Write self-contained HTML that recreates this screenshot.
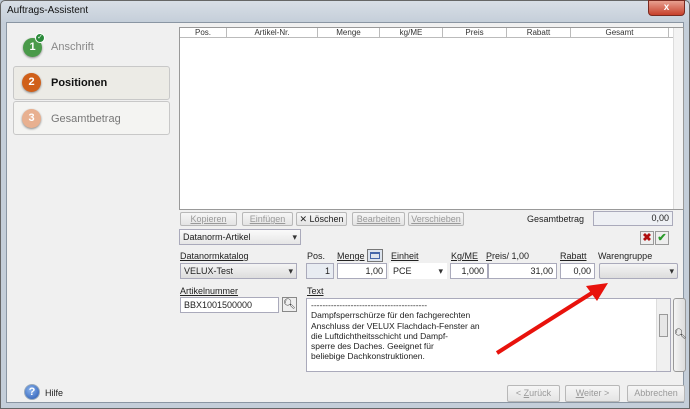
<!DOCTYPE html><html><head><style>
*{box-sizing:border-box;margin:0;padding:0}
body{width:690px;height:409px;overflow:hidden;font-family:"Liberation Sans",sans-serif;font-size:9px;color:#222;background:#bcc7d3;position:relative}
.a{position:absolute}
.win{left:0;top:0;width:690px;height:409px;background:linear-gradient(#d8dee6,#c4ced9 22px,#c4ced9);border:1px solid #666;border-radius:5px 5px 0 0}
.cl{left:6px;top:22px;width:678px;height:381px;background:#f0f0f0;border:1px solid #8a96a3}
.btn{position:absolute;height:14px;border:1px solid #b8b8b8;background:linear-gradient(#f6f6f6,#e4e4e4);border-radius:2px;color:#999;text-align:center;line-height:12px;font-size:9px}
.in{position:absolute;height:16px;border:1px solid #aab;background:#fff;line-height:14px;padding:0 3px;font-size:9px}
.lb{position:absolute;font-size:9px;color:#222}
.u{text-decoration:underline}
.dd:after{content:"▾";position:absolute;right:3px;top:0;font-size:9px;color:#333}
.circ{position:absolute;width:19px;height:19px;border-radius:50%;color:#fff;font-weight:bold;font-size:11px;text-align:center;line-height:19px;box-shadow:0 1px 2px #888}
.step{position:absolute;left:13px;width:157px;height:34px;border:1px solid #c8c8c8;border-radius:3px}
</style></head><body>
<div class="a win"></div>
<div class="a" style="left:7px;top:5px;font-size:10px;color:#111">Auftrags-Assistent</div>
<div class="a" style="left:648px;top:0;width:37px;height:16px;background:linear-gradient(#e8a090,#c7402b);border:1px solid #7a2a20;border-radius:0 0 4px 4px;color:#fff;text-align:center;font-weight:bold;font-size:10px;line-height:14px">x</div>
<div class="a cl"></div>
<!-- sidebar -->
<div class="circ" style="left:23px;top:38px;background:#4a9a4a">1</div>
<div class="a" style="left:35px;top:33px;width:10px;height:10px;border-radius:50%;background:#2a8a3a;border:1px solid #fff;color:#fff;font-size:7px;text-align:center;line-height:8px">✓</div>
<div class="lb" style="left:51px;top:41px;font-size:11px;color:#888">Anschrift</div>
<div class="step" style="top:66px;background:#ecebe6"></div>
<div class="circ" style="left:22px;top:73px;background:#d0601a">2</div>
<div class="lb" style="left:51px;top:77px;font-size:11px;font-weight:bold;color:#111">Positionen</div>
<div class="step" style="top:101px;background:#f4f4f2"></div>
<div class="circ" style="left:22px;top:109px;background:#e8b090">3</div>
<div class="lb" style="left:51px;top:113px;font-size:11px;color:#777">Gesamtbetrag</div>
<!-- grid -->
<div class="a" style="left:179px;top:27px;width:505px;height:183px;background:#fff;border:1px solid #999"></div>
<div class="a" style="left:180px;top:28px;width:493px;height:10px;border-bottom:1px solid #bbb;font-size:8px;color:#333">
<span class="a" style="left:0;width:47px;text-align:center;border-right:1px solid #bbb">Pos.</span>
<span class="a" style="left:47px;width:91px;text-align:center;border-right:1px solid #bbb">Artikel-Nr.</span>
<span class="a" style="left:138px;width:62px;text-align:center;border-right:1px solid #bbb">Menge</span>
<span class="a" style="left:200px;width:63px;text-align:center;border-right:1px solid #bbb">kg/ME</span>
<span class="a" style="left:263px;width:64px;text-align:center;border-right:1px solid #bbb">Preis</span>
<span class="a" style="left:327px;width:64px;text-align:center;border-right:1px solid #bbb">Rabatt</span>
<span class="a" style="left:391px;width:98px;text-align:center;border-right:1px solid #bbb">Gesamt</span></div>
<div class="a" style="left:673px;top:28px;width:10px;height:181px;background:#f3f3f3;border-left:1px solid #ddd"></div>
<!-- button row -->
<div class="btn u" style="left:180px;top:212px;width:57px">Kopieren</div>
<div class="btn u" style="left:242px;top:212px;width:51px">Einfügen</div>
<div class="btn" style="left:296px;top:212px;width:51px;color:#222">✕ Löschen</div>
<div class="btn u" style="left:352px;top:212px;width:53px">Bearbeiten</div>
<div class="btn u" style="left:408px;top:212px;width:56px">Verschieben</div>
<div class="lb" style="left:527px;top:214px">Gesamtbetrag</div>
<div class="in" style="left:593px;top:211px;width:80px;height:15px;text-align:right;background:#eef0f4;line-height:13px">0,00</div>
<div class="in dd" style="left:179px;top:229px;width:122px;background:linear-gradient(#fafafa,#e6e6e6)">Datanorm-Artikel</div>
<div class="a" style="left:640px;top:231px;width:14px;height:14px;border:1px solid #999;background:#eee;color:#b01010;font-weight:bold;font-size:11px;text-align:center;line-height:12px">✖</div>
<div class="a" style="left:655px;top:231px;width:14px;height:14px;border:1px solid #999;background:#eee;color:#2a9a2a;font-weight:bold;font-size:11px;text-align:center;line-height:12px">✔</div>
<!-- labels -->
<div class="lb u" style="left:180px;top:251px">Datanormkatalog</div>
<div class="lb" style="left:307px;top:251px">Pos.</div>
<div class="lb u" style="left:337px;top:251px">Menge</div>
<div class="a" style="left:367px;top:249px;width:16px;height:13px;border:1px solid #777;background:#dde4ee"><div style="margin:2px;height:7px;border:1px solid #46a;border-top:2px solid #46a"></div></div>
<div class="lb u" style="left:391px;top:251px">Einheit</div>
<div class="lb u" style="left:451px;top:251px">Kg/ME</div>
<div class="lb" style="left:486px;top:251px"><span class="u">P</span>reis/ 1,00</div>
<div class="lb u" style="left:560px;top:251px">Rabatt</div>
<div class="lb" style="left:598px;top:251px">Warengruppe</div>
<div class="in dd" style="left:180px;top:263px;width:117px;background:linear-gradient(#f4f4f4,#ddd)">VELUX-Test</div>
<div class="in" style="left:306px;top:263px;width:28px;text-align:right;background:#e8ecf2">1</div>
<div class="in" style="left:337px;top:263px;width:50px;text-align:right">1,00</div>
<div class="in dd" style="left:389px;top:263px;width:58px;border-color:#fff">PCE</div>
<div class="in" style="left:450px;top:263px;width:38px;text-align:right">1,000</div>
<div class="in" style="left:488px;top:263px;width:69px;text-align:right">31,00</div>
<div class="in" style="left:560px;top:263px;width:35px;text-align:right">0,00</div>
<div class="in dd" style="left:599px;top:263px;width:79px;background:linear-gradient(#f4f4f4,#ddd);border-radius:2px"></div>
<div class="lb u" style="left:180px;top:286px">Artikelnummer</div>
<div class="lb u" style="left:307px;top:286px">Text</div>
<div class="in" style="left:180px;top:297px;width:99px">BBX1001500000</div>
<div class="a" style="left:282px;top:297px;width:15px;height:15px;border:1px solid #888;background:#eee;font-size:10px;text-align:center;line-height:13px">🔍︎</div>
<div class="a" style="left:306px;top:298px;width:365px;height:74px;background:#fff;border:1px solid #aab;font-size:8.5px;line-height:10.3px;padding:1px 4px">
-----------------------------------------<br>Dampfsperrschürze für den fachgerechten<br>Anschluss der VELUX Flachdach-Fenster an<br>die Luftdichtheitsschicht und Dampf-<br>sperre des Daches. Geeignet für<br>beliebige Dachkonstruktionen.</div>
<div class="a" style="left:656px;top:299px;width:14px;height:72px;background:#f0f0f0;border-left:1px solid #ddd"><div style="margin:15px 2px 0;height:23px;border:1px solid #999;background:#e6e6e6"></div></div>
<div class="a" style="left:673px;top:298px;width:13px;height:74px;border:1px solid #999;border-radius:3px;background:linear-gradient(90deg,#f4f4f4,#ddd);font-size:10px;line-height:72px;text-align:center">🔍︎</div>
<svg class="a" style="left:490px;top:278px" width="125" height="82"><line x1="7" y1="75" x2="105" y2="13" stroke="#e8120c" stroke-width="4"/><polygon points="118,5 96,8 107,23" fill="#e8120c"/></svg>
<div class="a" style="left:24px;top:384px;width:16px;height:16px;border-radius:50%;background:radial-gradient(circle at 40% 35%,#8ab4ee,#2456b0);border:1px solid #9ab;color:#fff;font-weight:bold;font-size:11px;text-align:center;line-height:14px">?</div>
<div class="lb" style="left:45px;top:388px">Hilfe</div>
<div class="btn" style="left:507px;top:385px;width:53px;height:17px;line-height:15px">&lt; <span class="u">Z</span>urück</div>
<div class="btn" style="left:565px;top:385px;width:55px;height:17px;line-height:15px"><span class="u">W</span>eiter &gt;</div>
<div class="btn" style="left:627px;top:385px;width:58px;height:17px;line-height:15px">Abbrechen</div>
</body></html>
